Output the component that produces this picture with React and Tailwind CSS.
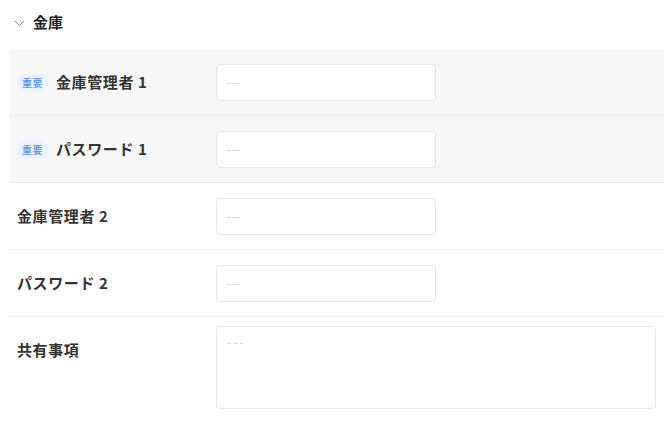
const font = { fontFamily: '"Noto Sans CJK JP", "Noto Sans", sans-serif' }

function Badge() {
  return (
    <span className="mr-[8px] inline-flex h-[17px] items-center rounded-[6px] bg-[#e9f2fe] px-[5px] text-[10px] font-medium tracking-[0.5px] text-[#5b8fe3]">
      重要
    </span>
  )
}

function Row({ label, important, last }) {
  return (
    <div
      className={`flex h-[67px] items-center ${important ? 'bg-[#f7f7f7]' : ''} ${
        last ? '' : 'border-b border-[#ececec]'
      }`}
    >
      <div className="flex w-[207px] items-center pl-[8px]">
        {important && <Badge />}
        <span className="text-[15px] font-bold tracking-[0.6px] text-[#333]">{label}</span>
      </div>
      <div className="flex h-[37px] w-[220px] items-center rounded-[4px] border border-[#e6e6e6] bg-white px-[10px] text-[12px] text-[#cccccc]">
        ---
      </div>
    </div>
  )
}

export default function App() {
  return (
    <div className="h-[422px] w-[670px] bg-white" style={font}>
      <div className="flex h-[49px] items-center gap-[8px] pb-[4px] pl-[14px]">
        <svg width="11" height="7" viewBox="0 0 11 7" fill="none" className="mt-[1px]">
          <path d="M1 1l4.5 4.5L10 1" stroke="#888" strokeWidth="1" />
        </svg>
        <span className="text-[15px] font-bold text-[#222]">金庫</span>
      </div>
      <div className="ml-[9px] w-[655px]">
        <Row label="金庫管理者 1" important />
        <Row label="パスワード 1" important />
        <Row label="金庫管理者 2" />
        <Row label="パスワード 2" />
        <div className="flex pt-[9px]">
          <div className="w-[207px] pl-[8px] pt-[11px]">
            <span className="text-[15px] font-bold tracking-[0.6px] text-[#333]">共有事項</span>
          </div>
          <div className="h-[83px] w-[440px] rounded-[4px] border border-[#e6e6e6] bg-white px-[10px] py-[6px] text-[12px] tracking-[2px] text-[#cccccc]">
            ---
          </div>
        </div>
      </div>
    </div>
  )
}
